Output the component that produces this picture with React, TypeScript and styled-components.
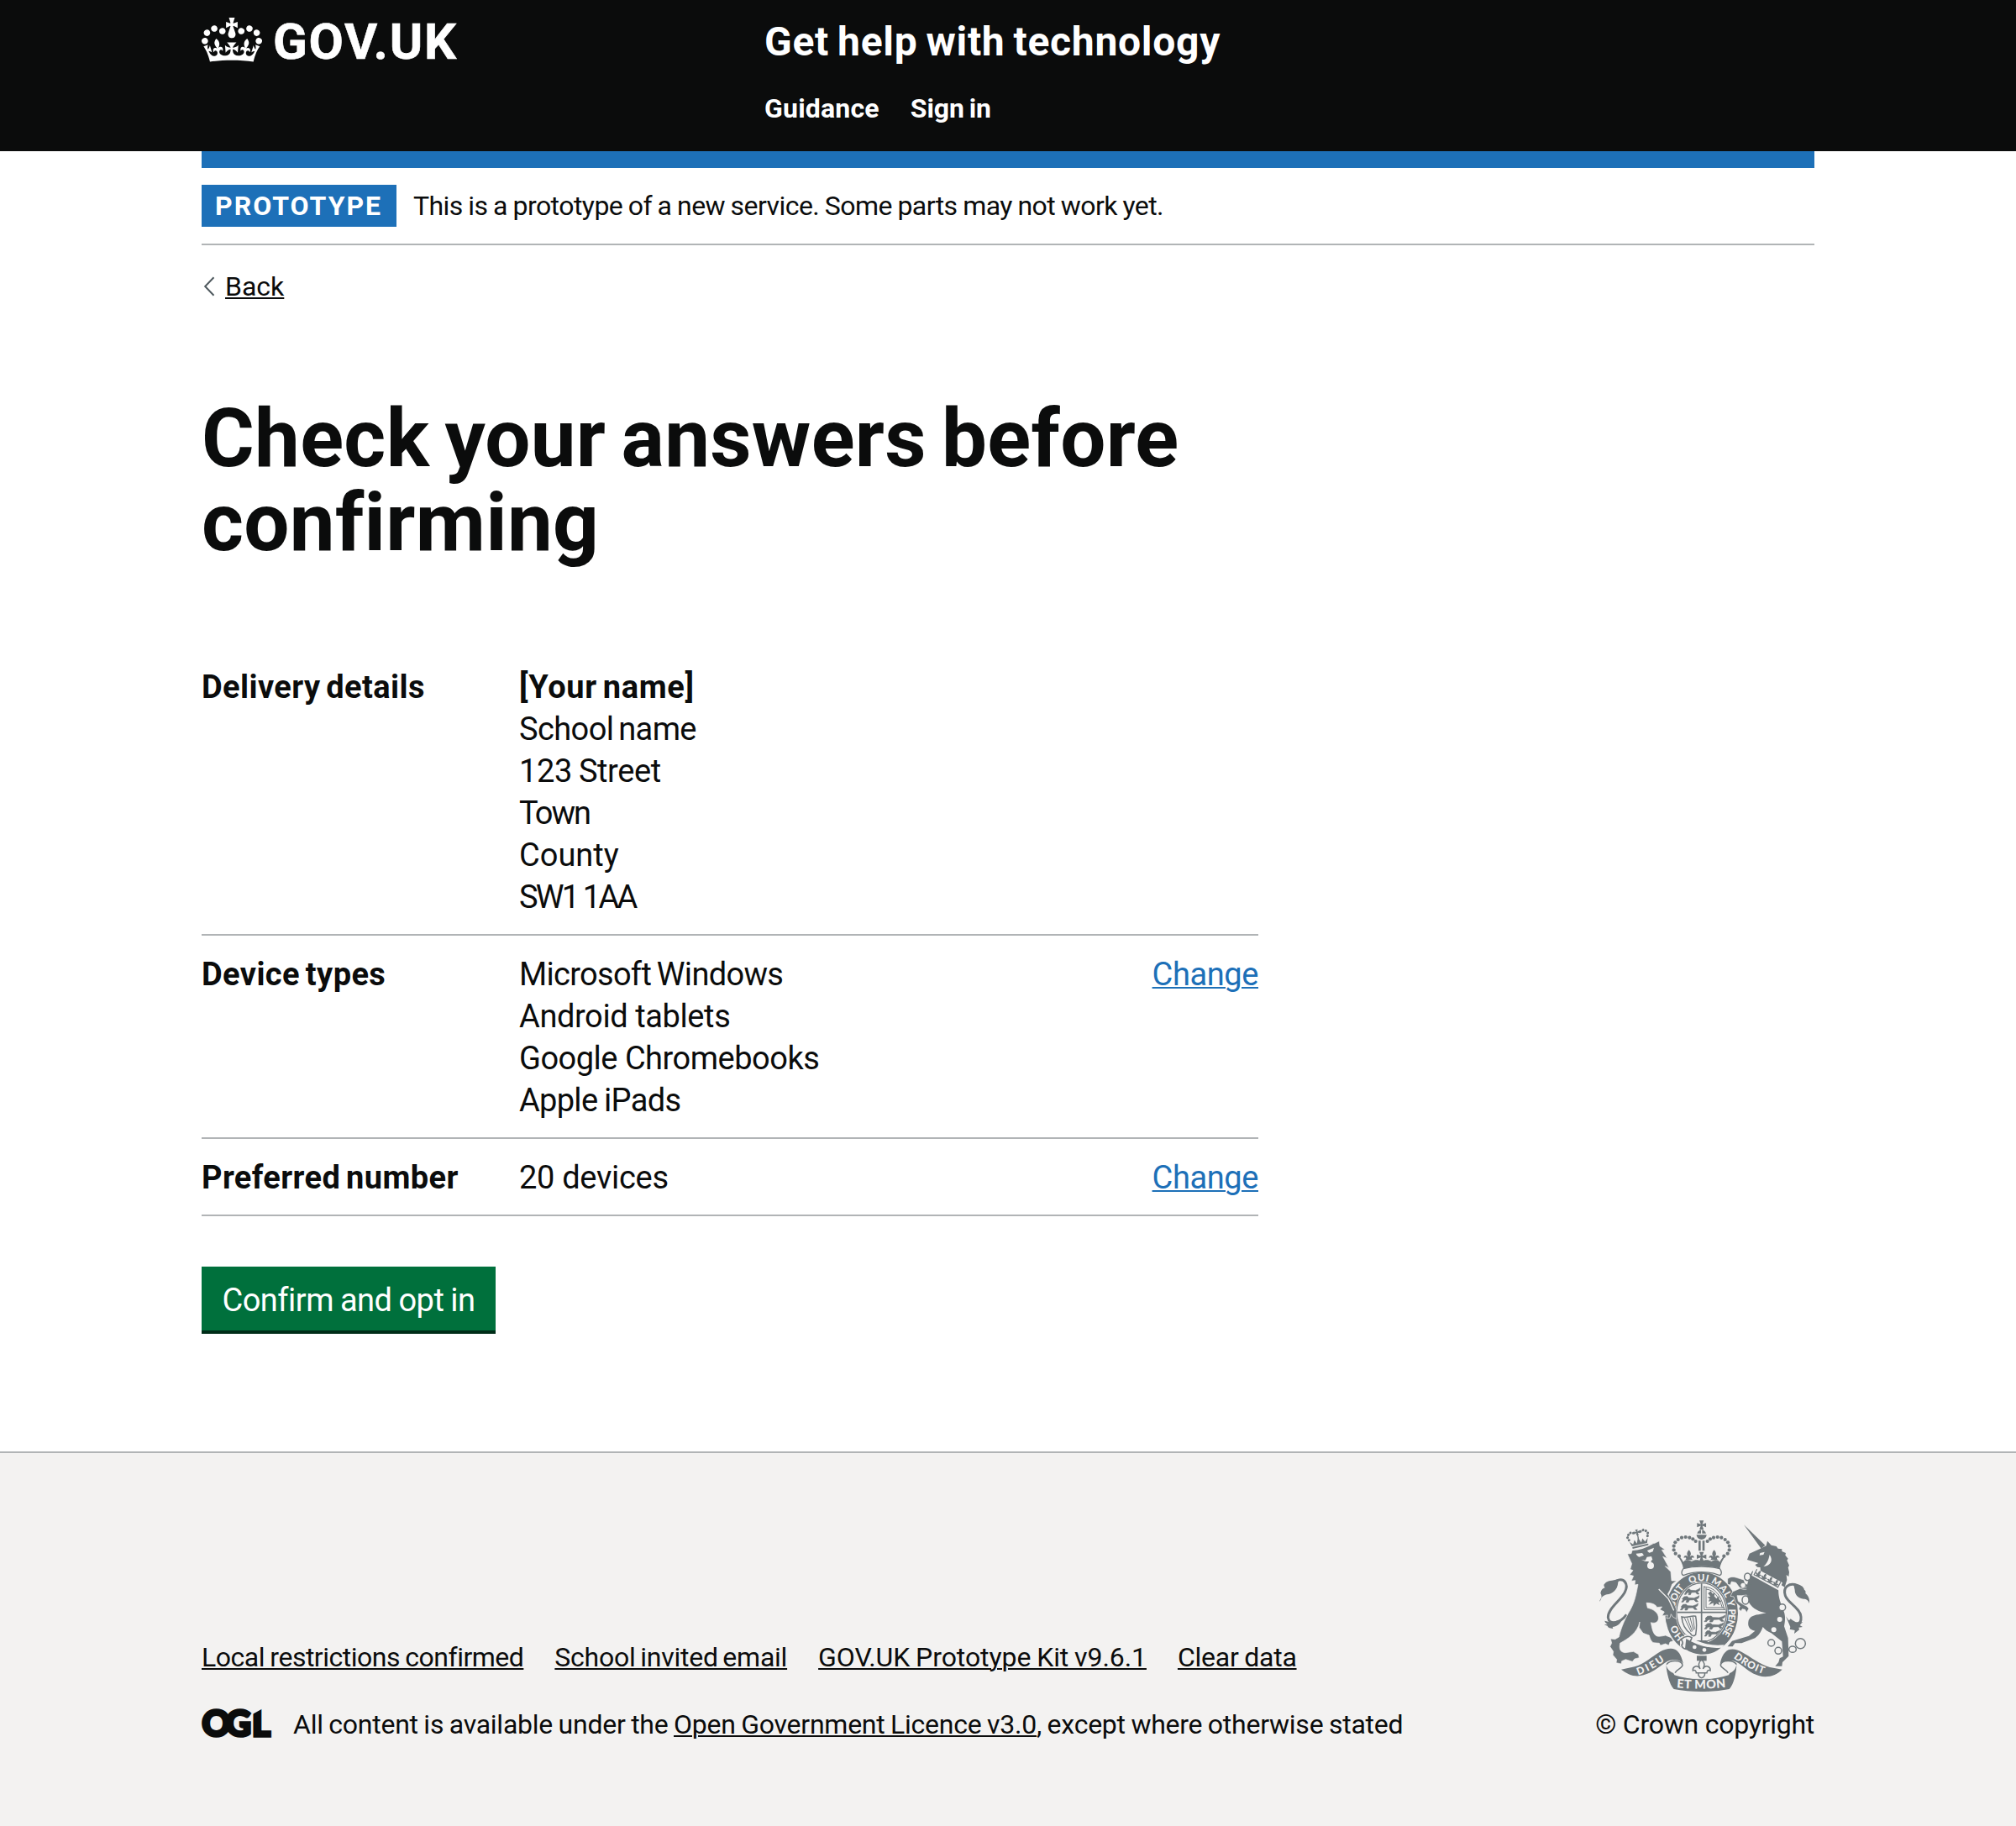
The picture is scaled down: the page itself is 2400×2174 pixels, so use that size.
import React from "react";
import styled, { createGlobalStyle, css } from "styled-components";

const INK = "#0b0c0c";
const BLUE = "#1d70b8";
const BORDER = "#b1b4b6";
const FOOTER = "#f3f2f1";
const CREST = "#6f777b";

const GlobalStyle = createGlobalStyle`
  body {
    margin: 0;
    background: #fff;
    color: ${INK};
    font-family: Roboto, "Liberation Sans", sans-serif;
    font-size: 32px;
    line-height: 40px;
    -webkit-font-smoothing: antialiased;
  }
  * { box-sizing: border-box; }
`;

const Page = styled.div`
  display: flex;
  flex-direction: column;
  min-height: 2174px;
`;

const Container = styled.div`
  width: 1920px;
  margin: 0 auto;
`;

const Header = styled.header`
  height: 180px;
  background: ${INK};
  color: #fff;
`;

const HeaderRow = styled(Container)`
  display: grid;
  grid-template-columns: 670px 1fr;
`;

const Logo = styled.a`
  display: flex;
  align-items: flex-start;
  gap: 13px;
  padding-top: 21px;
  color: #fff;
`;

const LogoText = styled.span`
  font-size: 60px;
  line-height: 60px;
  font-weight: 700;
  letter-spacing: 1.7px;
  -webkit-text-stroke: 0.6px #fff;
  margin-top: -1px;
`;

const ServiceName = styled.a`
  display: block;
  padding-top: 20px;
  font-size: 48px;
  line-height: 60px;
  font-weight: 700;
  letter-spacing: 0.7px;
  word-spacing: -2.5px;
`;

const Nav = styled.nav`
  display: flex;
  gap: 37px;
  margin-top: 29px;
  font-weight: 700;
`;

const Track = styled.span<{ $ls?: number; $ws?: number }>`
  letter-spacing: ${p => p.$ls ?? 0}px;
  word-spacing: ${p => p.$ws ?? 0}px;
  white-space: nowrap;
`;

const BlueBar = styled.div`
  height: 20px;
  background: ${BLUE};
`;

const PhaseBanner = styled.div`
  display: flex;
  align-items: center;
  gap: 20px;
  padding: 20px 0;
  border-bottom: 2px solid ${BORDER};
`;

const Tag = styled.strong`
  width: 232px;
  height: 50px;
  padding: 5px 0 0 16px;
  background: ${BLUE};
  color: #fff;
  font-weight: 700;
  letter-spacing: 2px;
`;

const underline = css`
  text-decoration: underline;
  text-decoration-thickness: 2px;
  text-underline-offset: 2px;
`;

const BackLink = styled.a`
  display: inline-flex;
  align-items: center;
  gap: 12px;
  margin-top: 29px;
  padding-left: 2px;
  span { ${underline} }
`;

const Title = styled.h1`
  width: 1258px;
  margin: 110px 0 100px;
  font-size: 96px;
  line-height: 100px;
  font-weight: 700;
  letter-spacing: 0.3px;
  word-spacing: -6px;
`;

const Summary = styled.dl`
  width: 1258px;
  margin: 0;
  font-size: 38px;
  line-height: 50px;
`;

const SummaryRow = styled.div`
  display: grid;
  grid-template-columns: 378px 1fr auto;
  padding: 21px 0 19px;
  border-bottom: 2px solid ${BORDER};
`;

const Key = styled.dt`
  font-weight: 700;
  letter-spacing: 0.4px;
  word-spacing: -3px;
`;

const Value = styled.dd`
  display: flex;
  flex-direction: column;
  margin: 0;
`;

const Name = styled.strong`
  letter-spacing: 0.65px;
  word-spacing: -3px;
`;

const Action = styled.dd`
  margin: 0;
  letter-spacing: -0.4px;
  a {
    ${underline}
    color: ${BLUE};
  }
`;

const Button = styled.button`
  display: block;
  width: 350px;
  height: 76px;
  margin: 60px 0 0;
  padding: 4px 0 0;
  border: 0;
  background: #00703c;
  box-shadow: 0 4px 0 #002d18;
  color: #fff;
  font: 400 38px/38px Roboto, "Liberation Sans", sans-serif;
`;

const Footer = styled.footer`
  flex: 1;
  margin-top: 144px;
  border-top: 2px solid ${BORDER};
  background: ${FOOTER};
`;

const FooterRow = styled(Container)`
  display: flex;
  justify-content: space-between;
  align-items: flex-end;
  padding-top: 77px;
`;

const FooterLinks = styled.div`
  display: flex;
  gap: 37px;
  margin-bottom: 40px;
  a { ${underline} }
`;

const Licence = styled.div`
  display: flex;
  align-items: flex-start;
  a { ${underline} }
`;

const OglMark = styled.svg`
  flex: none;
  width: 84px;
  height: 36px;
  margin: 1px 25px 0 0;
  overflow: visible;
`;

const Copyright = styled.a`
  display: flex;
  flex-direction: column;
  align-items: flex-end;
`;

const CrestBox = styled.svg`
  width: 260px;
  height: 210px;
  margin-bottom: 16px;
  overflow: visible;
`;

const CrownIcon = () => (
  <svg width="72" height="53" viewBox="0 0 132 97" fill="currentColor">
    <path
      fillRule="evenodd"
      d="M25 30.2c3.5 1.5 7.7-.2 9.1-3.7 1.5-3.6-.2-7.8-3.9-9.2-3.6-1.4-7.6.3-9.1 3.9-1.4 3.5.3 7.5 3.9 9zM9 39.5c3.6 1.5 7.8-.2 9.2-3.7 1.5-3.6-.2-7.8-3.9-9.1-3.6-1.5-7.6.2-9.1 3.8-1.4 3.5.3 7.5 3.8 9zM4.4 57.2c3.5 1.5 7.7-.2 9.1-3.8 1.5-3.6-.2-7.7-3.9-9.1-3.5-1.5-7.6.3-9.1 3.8-1.4 3.5.3 7.6 3.9 9.1zm38.3-21.4c3.5 1.5 7.7-.2 9.1-3.8 1.5-3.6-.2-7.7-3.9-9.1-3.6-1.5-7.6.3-9.1 3.8-1.3 3.6.4 7.7 3.9 9.1zm64.4-5.6c-3.6 1.5-7.8-.2-9.1-3.7-1.5-3.6.2-7.8 3.8-9.2 3.6-1.4 7.7.3 9.2 3.9 1.3 3.5-.4 7.5-3.9 9zm15.9 9.3c-3.6 1.5-7.7-.2-9.1-3.7-1.5-3.6.2-7.8 3.7-9.1 3.6-1.5 7.7.2 9.2 3.8 1.5 3.5-.3 7.5-3.8 9zm4.7 17.7c-3.6 1.5-7.8-.2-9.2-3.8-1.5-3.6.2-7.7 3.9-9.1 3.6-1.5 7.7.3 9.2 3.8 1.3 3.5-.4 7.6-3.9 9.1zM89.3 35.8c-3.6 1.5-7.8-.2-9.2-3.8-1.4-3.6.2-7.7 3.9-9.1 3.6-1.5 7.7.3 9.2 3.8 1.4 3.6-.3 7.7-3.9 9.1zM69.7 17.7l8.9 4.7V9.3l-8.9 2.8c-.2-.3-.5-.6-.9-.9L72.4 0H59.6l3.5 11.2c-.3.3-.6.5-.9.9l-8.8-2.8v13.1l8.8-4.7c.3.3.6.7.9.9l-5 15.4v.1c-.2.8-.4 1.6-.4 2.4 0 4.1 3.1 7.5 7 8.1h.2c.3 0 .7.1 1 .1.4 0 .7 0 1-.1h.2c4-.6 7.1-4.1 7.1-8.1 0-.8-.1-1.7-.4-2.4V34l-5.1-15.4c.4-.2.7-.6 1-.9zM66 92.8c16.9 0 32.8 1.1 47.1 3.2 4-16.9 8.9-26.7 14-33.5l-9.6-3.4c1 4.9 1.1 7.2 0 10.2-1.5-1.4-3-4.3-4.2-8.7L108.6 76c2.8-2 5-3.2 7.5-3.3-4.4 9.4-10 11.9-13.6 11.2-4.3-.8-6.3-4.6-5.6-7.9 1-4.7 5.7-5.9 8-.5 4.3-8.7-3-11.4-7.6-8.8 7.1-7.2 7.9-13.5 2.1-21.1-8 6.1-8.1 12.3-4.5 20.8-4.7-5.4-12.1-2.5-9.5 6.2 3.4-5.2 7.9-2 7.2 3.1-.6 4.3-6.4 7.8-13.5 7.2-10.3-.9-10.9-8-11.2-13.8 2.5-.5 7.1 1.8 11 7.3L80.2 60c-4.1 4.4-8 5.3-12.3 5.4 1.4-4.4 8-11.6 8-11.6H55.5s6.4 7.2 7.9 11.6c-4.2-.1-8-1-12.3-5.4l1.4 16.4c3.9-5.5 8.5-7.7 10.9-7.3-.3 5.8-.9 12.8-11.1 13.8-7.2.6-12.9-2.9-13.5-7.2-.7-5 3.8-8.3 7.1-3.1 2.7-8.7-4.6-11.6-9.4-6.2 3.7-8.5 3.6-14.7-4.6-20.8-5.8 7.6-5 13.9 2.2 21.1-4.7-2.6-11.9.1-7.7 8.8 2.3-5.5 7.1-4.2 8.1.5.7 3.3-1.3 7.1-5.7 7.9-3.5.7-9-1.8-13.5-11.2 2.5.1 4.7 1.3 7.5 3.3l-4.7-15.4c-1.2 4.4-2.7 7.2-4.3 8.7-1.1-3-.9-5.3 0-10.2l-9.5 3.4c5 6.9 9.9 16.7 14 33.5 14.8-2.1 30.8-3.2 47.7-3.2z"
    />
  </svg>
);

const Chevron = () => (
  <svg width="14" height="24" viewBox="0 0 14 24" fill="none" stroke="#505a5f" strokeWidth="2">
    <path d="M12.5 1.2 2.2 12l10.3 10.8" />
  </svg>
);

const Ogl = () => (
  <OglMark viewBox="0 0 84 36" fill={INK}>
    <text x="0.5 28.5 60" y="32.5" fontFamily="Lato" fontWeight="900" fontSize="42" stroke={INK} strokeWidth="3.5">
      OGL
    </text>
    <path fill={FOOTER} d="M60-2h14v1.5L60 7.3z" />
  </OglMark>
);

const CREST_ARCH = [[357, 187], [344, 178], [338, 165], [338, 151], [343, 138], [353, 128], [366, 121], [380, 119], [394, 121], [406, 126], [416, 134]];

const PassantLion = ({ x, y, sx = 1.35 }: { x: number; y: number; sx?: number }) => (
  <path
    transform={`translate(${x} ${y}) scale(${sx} 1)`}
    stroke={CREST}
    strokeWidth="1.6"
    d="M0 9l5-8 8-1 4 5 14 1 8-4 6-5-2 9-6 4 5 9h-6l-5-7-12 1-3 8h-6l2-9-6 2-3 6H-2l4-8z"
  />
);

const CrestFleur = ({ x, y, s = 1 }: { x: number; y: number; s?: number }) => (
  <path
    transform={`translate(${x} ${y}) scale(${s})`}
    d="M0-22C-9-12-8-5-3 3c-6-9-17-5-15 4 3-3 7-3 8 1 0 3-2 5-5 6H15c-3-1-5-3-5-6 1-4 5-4 8-1 2-9-9-13-15-4C8-5 9-12 0-22z"
  />
);

const CrossPattee = ({ x, y, s = 1 }: { x: number; y: number; s?: number }) => (
  <path
    transform={`translate(${x} ${y}) scale(${s})`}
    d="M-8-17H8L3-3l14-5V8L3 3l5 14H-8L-3 3l-14 5V-8l14 5z"
  />
);

const Crest = () => (
  <CrestBox viewBox="60 50 780 630" fill={CREST}>
    <defs>
      <path id="garter" d="M385 486A97 114 0 1 1 489 486" />
      <path id="dieu" d="M211 612Q264 594 314 555" />
      <path id="droit" d="M551 550Q603 592 672 613" />
      <path id="etmon" d="M348 657Q437 665 528 655" />
    </defs>

    {/* garter with its motto */}
    <ellipse cx="437" cy="391" rx="135" ry="153" fill={FOOTER} />
    <ellipse cx="437" cy="391" rx="130" ry="147" />
    <ellipse cx="437" cy="388" rx="93" ry="109" fill={FOOTER} />
    <ellipse cx="437" cy="388" rx="89" ry="105" fill="none" stroke={CREST} strokeWidth="4" />
    <g fill={FOOTER} fontFamily="Lato" fontWeight="900" fontSize="34">
      <text><textPath href="#garter" startOffset="14" textLength="54">HO</textPath></text>
      <text><textPath href="#garter" startOffset="132" textLength="76">SOIT</textPath></text>
      <text><textPath href="#garter" startOffset="233" textLength="66">QUI</textPath></text>
      <text><textPath href="#garter" startOffset="309" textLength="112">MAL Y</textPath></text>
      <text><textPath href="#garter" startOffset="428" textLength="94">PENSE</textPath></text>
    </g>
    <path fill="none" stroke={CREST} strokeWidth="5" d="M437 285v206M349 388h177" />

    {/* quartered shield */}
    <clipPath id="shield"><ellipse cx="437" cy="388" rx="86" ry="102" /></clipPath>
    <g clipPath="url(#shield)">
      <PassantLion x={378} y={304} sx={1.2} /><PassantLion x={368} y={331} /><PassantLion x={364} y={359} />
      <PassantLion x={450} y={401} sx={1.6} /><PassantLion x={450} y={427} sx={1.5} /><PassantLion x={450} y={453} sx={1.2} />
      <path fill="none" stroke={CREST} strokeWidth="3" d="M446 294v84h76M453 300v71h66M446 297c34 0 60 26 72 80M453 305c26 2 46 26 58 66" />
      <path d="M460 320l10-8 5 9 10-1-3 10 8 9 9-9 0 11 9 8-11 3 5 11-12-6-10 9-1-12-17 8 11-15-11 2 4-10-9-5 12-3z" />
      <path fill="none" stroke={CREST} strokeWidth="4.5" d="M366 404c18 6 34-6 50-2 4 20 4 40 0 66-8 8-16 2-18-4-20-14-30-34-32-60z" />
      <path fill="none" stroke={CREST} strokeWidth="3" d="M376 408l24 50M386 408l18 48M396 406l12 46M406 404l6 44" />
    </g>
    <path d="M421 488h32l10 8-26 6-28-4z" />

    {/* lion: tail, body, face and coronet */}
    <path fill="none" stroke={CREST} strokeWidth="9" d="M132 276c28-14 46 10 31 40-17 32-60 58-60 90 4 28 40 24 66-10" />
    <path d="M72 350c10-10 9-24 4-30 2-12 8-18 16-20-3-4-5-8-3-12 7-8 12-13 28-14 10-2 18-4 27-6l-5 12c-2 30-22 42-40 44-14 4-22 12-27 26zM91 418l24 6 40-14c-8 22-22 28-36 30l2 6c-14-2-18-4-20-10l-12-4 12-2c-6-4-9-7-10-12z" />
    <path stroke={FOOTER} strokeWidth="2" d="M172 179l14-1 4-14c24-2 46-10 68-21l12-2 16-8 2 18 19 13-12 1 19 30-15-6 22 40-14-6 20 20 3 32 18 0-16 12-8 22-8 14 20 30c6 10 10 20 12 28l-1 30-13-7-6-10-4 14-12 2 4-12-20 2 8-14-16-8 8-10-18 2c-6-12-20-16-38-16l4 18c20 4 42 18 39 40-3 14-16 16-27 12 4 18 6 40 20 48 10 4 22 0 32-2l20 8 8 12-12 4-4 12-12-6-18 6-4-8-22-2c-10-8-12-18-14-26l-22-8-14-20 2-20c-8 40-42 60-70 76-4 20 0 32 18 34l30-4 18 10 2 12-16 4-8 10-24-8-14 6-2 10-18-4 2-12-14-16 2-12-12-18 6-12-4-16 16 2 14-8c8-36 24-70 40-96 18-32 22-62 28-92l-12 2 2-16-14 2 8-18-14-4 12-16-10-4 6-20z" />
    <g fill={FOOTER}>
      <path d="M203 178l22-2 6 8-16 6c-6-2-10-6-12-12zM243 167l24-10-4 14-12 4c-4-2-6-4-8-8z" />
      <path d="M222 200l14 2 6-12 16-2 4 12-12 6h-14z" />
      <circle cx="255" cy="221" r="12" />
      <path d="M248 200h10l-2 14h-8z" />
    </g>
    <path fill="none" stroke={FOOTER} strokeWidth="4" d="M186 166c30-2 54-10 76-24M284 305l34 34c10 18 14 30 20 42" />
    <g transform="rotate(-13 215 140)">
      <path d="M186 146l-5-18 11 12 8-14 6 14 8-20 8 20 7-14 7 14 12-12-6 18zM187 149h58v6h-58z" />
      <CrossPattee x={215} y={101} s={0.6} />
      {[[181, 122], [178, 112], [183, 103], [192, 98], [202, 101], [228, 101], [238, 98], [247, 103], [252, 112], [249, 122]].map(([x, y]) => (
        <circle key={x} cx={x} cy={y} r="4.6" />
      ))}
      <path d="M213 100h4v24h-4z" />
    </g>

    {/* unicorn: tail, horn, head, collar and body */}
    <path fill="none" stroke={CREST} strokeWidth="9" d="M780 292c-30-12-54 6-44 36 10 28 54 44 56 76 2 26-14 32-40 10" />
    <path d="M822 356c-4-12-10-16-20-16-20-2-32-14-32-32l-4-18 16-2c10 4 20 8 22 20 4 2 6 6 4 12 10 8 16 20 14 36zM738 402l10 14 28 10 22-4-10 12 10 6-14 2 2 8-18 14 2-12-18-4 2-8z" />
    <path d="M588 75l76 73-14 12z" />
    <path d="M600 200l8-22 36-16 24-12 4-17 14 15 18 4 6 8 14 2v8l14 6-2 8 10 12-4 6 8 18-4 8 4 16-2 16-8-6 2 18-8 26-86-54-2-24 18-4-14 12-14-2-8-8 12-6z" />
    <path d="M620 240l92 62c-2 24 4 46 16 74 10 24 8 40 4 62l14 42 2 64-22 22-2 14-24 0 12-14 4-14 12-6-4-54-38-30c-14-6-22-12-30-22-6 14-10 26-28 40l-48 18-24 0-8 12-18 0 16-20 60-18 22-18c-22-4-26-18-24-32 2-16 16-24 36-26l28-6c-24-4-48-14-62-38l-8-30c-4-20 6-52 18-78z" />
    <path stroke={FOOTER} strokeWidth="2" d="M530 268c10-8 20-8 32-4l26 8 4 12 10 6 2 14c-16 4-26 2-34-8l-10-14-16-4-4 12-10-2zM540 330l8-16 28-12 36-8 4 30-36 4-16 0 4 20 18 12 12 6 8 8-8 14-6-10-10-2-4 8-8-8 4-10-16-14-6-20z" />
    <path d="M598 288h20v40h-20z" />
    <path fill={FOOTER} d="M626 228l100 54-12 28-98-54zM646 176l16-4-4 10-14 2z" />
    <path fill={FOOTER} d="M680 182c14 20 4 40-22 42 10-8 18-20 22-42z" />
    <g transform="translate(671 269) rotate(28)">
      <CrestFleur x={-35} y={-2} s={0.62} /><CrestFleur x={-12} y={-2} s={0.62} />
      <CrestFleur x={12} y={-2} s={0.62} /><CrestFleur x={35} y={-2} s={0.62} />
      <path d="M-47 6h95v3.5h-95zM-50-14h3.5v24h-3.5zM46-14h3.5v24h-3.5z" />
    </g>
    <g fill={FOOTER}>
      <circle cx="716" cy="413" r="9" /><circle cx="695" cy="450" r="9" /><circle cx="585" cy="291" r="8" />
    </g>
    <g fill={FOOTER} stroke={CREST} strokeWidth="4.5">
      <ellipse cx="601" cy="261" rx="11" ry="13" /><ellipse cx="594" cy="344" rx="12" ry="15" /><circle cx="725" cy="370" r="12" />
      <circle cx="686" cy="497" r="12" /><circle cx="711" cy="525" r="12" /><ellipse cx="762" cy="520" rx="13" ry="11" /><circle cx="790" cy="499" r="18" />
    </g>

    {/* buckle and strap */}
    <path fill={FOOTER} d="M360 492l18-26 34 20c36 16 66 22 106 18l-22 30c-60 20-110 10-136-26z" />
    <path d="M382 482c38 24 82 36 124 32-38 34-92 30-128 4z" />
    <path fill="none" stroke={CREST} strokeWidth="5" d="M364 484c14-12 28-12 38-6-2 14-14 18-12 40-14 4-24-4-24-14 6-4 4-12-2-20z" />
    <g fill={FOOTER}><circle cx="412" cy="512" r="7" /><circle cx="447" cy="522" r="7" /></g>

    {/* imperial crown */}
    <CrossPattee x={437} y={76} s={0.95} />
    <path d="M421 106c3-8 9-13 16-13s13 5 16 13zM419 111h36c-1 10-8 17-18 17s-17-7-18-17z" />
    <path fill={FOOTER} d="M435 93h4v14h-4z" />
    {CREST_ARCH.map(([x, y]) => (
      <React.Fragment key={`${x}-${y}`}>
        <circle cx={x} cy={y} r="6.3" />
        <circle cx={874 - x} cy={y} r="6.3" />
      </React.Fragment>
    ))}
    <path d="M426 132h8v36h-8zM440 132h8v36h-8z" />
    <CrossPattee x={437} y={189} />
    <CrestFleur x={392} y={187} /><CrestFleur x={482} y={187} />
    <path d="M350 184c8 4 14 8 22 24 8-10 18-8 30-2 12-8 24-6 35 0 11-6 23-8 35 0 12-6 22-8 30 2 8-16 14-20 22-24-12 16-20 32-22 48-40-12-90-12-130 0-2-16-10-32-22-48z" />
    <path fill={FOOTER} stroke={CREST} strokeWidth="4" d="M372 232c-8 10-8 20 0 24 38-16 92-16 130 0 8-4 8-14 0-24-38-10-92-10-130 0z" />

    {/* pendant lily */}
    <path d="M420 543h35v18h-35z" />
    <path fill="none" stroke={CREST} strokeWidth="4.5" d="M437 556c-12 12-12 20-5 34-8-16-28-10-26 6 6-4 12 0 12 8h8c-2 8 2 16 11 18 9-2 13-10 11-18h8c0-8 6-12 12-8 2-16-18-22-26-6 7-14 7-22-5-34zM426 604h22" />

    {/* motto ribbon */}
    <path d="M150 592l48-10c34-8 64-38 92-54 18-10 38-14 52-8 18 10 24 28 30 52-8-10-18-14-34-14-16-2-26 6-34 12-22 16-44 34-74 42-32 10-58-4-80-20z" />
    <path d="M725 592l-44-8c-36-10-70-38-100-54-16-10-34-14-48-8-18 10-26 28-30 52 8-10 18-14 34-14 16-2 28 6 36 12 22 16 40 34 68 42 32 10 64-2 84-22z" />
    <path fill={FOOTER} stroke={CREST} strokeWidth="4.5" d="M312 574c12-18 54-16 57 2 0 12-22 14-28 30M562 574c-12-18-54-16-57 2 0 12 22 14 28 30" />
    <path d="M310 572c2 14 8 22 20 30 60 32 154 32 214 0 12-8 16-16 18-30 0 30-10 74-26 90-60 12-138 12-198 0-16-16-26-60-28-90z" />
    <path fill={FOOTER} d="M334 600c64 34 142 34 206 0l-6 12c-60 20-134 20-194 0z" />
    <g fill={FOOTER} fontFamily="Lato" fontWeight="900" fontSize="36">
      <text><textPath href="#dieu" textLength="108">DIEU</textPath></text>
      <text><textPath href="#droit" textLength="122">DROIT</textPath></text>
      <text fontSize="43"><textPath href="#etmon" textLength="176">ET MON</textPath></text>
    </g>
  </CrestBox>
);

const rows = [
  {
    key: "Delivery details",
    name: "[Your name]",
    lines: [["School name", -0.6, -3], ["123 Street", -0.4, -1], ["Town", -2, 0], ["County", 0, 0], ["SW1 1AA", -2.8, 0]],
  },
  {
    key: "Device types",
    lines: [["Microsoft Windows", -0.7, -2], ["Android tablets", -0.4, 0], ["Google Chromebooks", -0.5, 0], ["Apple iPads", -0.7, -1]],
    change: true,
  },
  { key: "Preferred number", lines: [["20 devices", -0.3, 0]], change: true },
] as { key: string; name?: string; lines: [string, number, number][]; change?: boolean }[];

const links: [string, number, number][] = [
  ["Local restrictions confirmed", -0.5, -1],
  ["School invited email", -0.25, -2],
  ["GOV.UK Prototype Kit v9.6.1", -0.08, -1],
  ["Clear data", -0.25, -1],
];

export default function App() {
  return (
    <Page>
      <GlobalStyle />
      <Header>
        <HeaderRow>
          <Logo>
            <CrownIcon />
            <LogoText>GOV.UK</LogoText>
          </Logo>
          <div>
            <ServiceName>Get help with technology</ServiceName>
            <Nav>
              <Track $ls={0.2}>Guidance</Track>
              <Track $ls={-0.1} $ws={-2}>Sign in</Track>
            </Nav>
          </div>
        </HeaderRow>
      </Header>
      <Container>
        <BlueBar />
        <PhaseBanner>
          <Tag>PROTOTYPE</Tag>
          <Track $ls={-0.56} $ws={-0.8}>This is a prototype of a new service. Some parts may not work yet.</Track>
        </PhaseBanner>
        <BackLink>
          <Chevron />
          <Track>Back</Track>
        </BackLink>
        <Title>Check your answers before confirming</Title>
        <Summary>
          {rows.map(row => (
            <SummaryRow key={row.key}>
              <Key>{row.key}</Key>
              <Value>
                {row.name && <Name>{row.name}</Name>}
                {row.lines.map(([text, ls, ws]) => (
                  <Track key={text} $ls={ls} $ws={ws}>{text}</Track>
                ))}
              </Value>
              {row.change && <Action><a>Change</a></Action>}
            </SummaryRow>
          ))}
        </Summary>
        <Button><Track $ls={-0.5} $ws={-1}>Confirm and opt in</Track></Button>
      </Container>
      <Footer>
        <FooterRow>
          <div>
            <FooterLinks>
              {links.map(([text, ls, ws]) => (
                <a key={text}><Track $ls={ls} $ws={ws}>{text}</Track></a>
              ))}
            </FooterLinks>
            <Licence>
              <Ogl />
              <Track $ls={-0.25} $ws={-1.1}>
                All content is available under the <a>Open Government Licence v3.0</a>, except where otherwise stated
              </Track>
            </Licence>
          </div>
          <Copyright>
            <Crest />
            <Track $ls={-0.25}>© Crown copyright</Track>
          </Copyright>
        </FooterRow>
      </Footer>
    </Page>
  );
}
